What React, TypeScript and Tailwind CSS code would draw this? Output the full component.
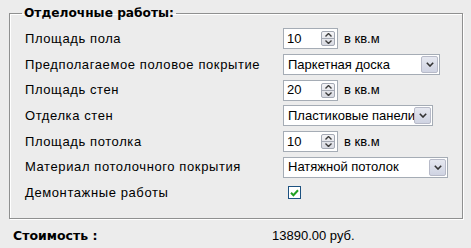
import React from "react";

const font = { fontFamily: '"Liberation Sans", Arial, sans-serif' };

function Spinner() {
  return (
    <div className="flex flex-col ml-auto mr-[2px] w-[14px] h-[15px] border border-[#a4a9b4] rounded-[2px] bg-gradient-to-b from-[#f4f4f6] to-[#d8dae2]">
      <div className="flex-1 flex items-center justify-center border-b border-[#a4a9b4]">
        <svg width="7" height="4" viewBox="0 0 7 4"><path d="M0.5 3.5 L3.5 0.5 L6.5 3.5" fill="none" stroke="#3c3c3c" strokeWidth="1.4" /></svg>
      </div>
      <div className="flex-1 flex items-center justify-center">
        <svg width="7" height="4" viewBox="0 0 7 4"><path d="M0.5 0.5 L3.5 3.5 L6.5 0.5" fill="none" stroke="#3c3c3c" strokeWidth="1.4" /></svg>
      </div>
    </div>
  );
}

function NumberInput({ value }: { value: string }) {
  return (
    <div className="flex items-center">
      <div className="flex items-center w-[55px] h-[21px] bg-white border border-[#a5acb5] pl-[3px] text-[13px] text-black">
        <span>{value}</span>
        <Spinner />
      </div>
      <span className="ml-[6px] text-[13px] text-black">в кв.м</span>
    </div>
  );
}

function Select({ value, width }: { value: string; width: number }) {
  return (
    <div
      className="flex items-center h-[21px] bg-white border border-[#a5acb5] pl-[4px] text-[13px] text-black"
      style={{ width }}
    >
      <span className="whitespace-nowrap overflow-hidden flex-1">{value}</span>
      <div className="w-[17px] h-[17px] mr-[1px] flex items-center justify-center border border-[#b7bac8] rounded-[2px] bg-gradient-to-b from-[#e6e8f0] to-[#cfd3e2]">
        <svg width="8" height="5" viewBox="0 0 8 5"><path d="M0.8 0.8 L4 4 L7.2 0.8" fill="none" stroke="#333" strokeWidth="1.6" /></svg>
      </div>
    </div>
  );
}

function Checkbox() {
  return (
    <div className="ml-[5px] w-[13px] h-[13px] border border-[#1c5180] bg-white flex items-center justify-center">
      <svg width="9" height="8" viewBox="0 0 9 8"><path d="M1 3.8 L3.4 6.2 L8 1.2" fill="none" stroke="#21a121" strokeWidth="2" /></svg>
    </div>
  );
}

const rows: { label: string; control: React.ReactNode }[] = [
  { label: "Площадь пола", control: <NumberInput value="10" /> },
  { label: "Предполагаемое половое покрытие", control: <Select value="Паркетная доска" width={157} /> },
  { label: "Площадь стен", control: <NumberInput value="20" /> },
  { label: "Отделка стен", control: <Select value="Пластиковые панели" width={150} /> },
  { label: "Площадь потолка", control: <NumberInput value="10" /> },
  { label: "Материал потолочного покрытия", control: <Select value="Натяжной потолок" width={165} /> },
  { label: "Демонтажные работы", control: <Checkbox /> },
];

export default function App() {
  return (
    <div className="w-[471px] h-[248px] bg-[#ececec] overflow-hidden" style={font}>
      <div className="pt-[6px] pl-[9px] pr-[8px]">
        <fieldset className="border border-[#8f9090] shadow-[1px_1px_0_#ffffff,inset_1px_1px_0_#ffffff] pl-[15px] pt-[6px] pb-[8px] h-[213px]">
          <legend className="-ml-[3px] px-[2px] font-bold text-black leading-[14px]" style={{ fontFamily: '"DejaVu Sans", Verdana, sans-serif', fontSize: "12.2px" }}>
            Отделочные работы:
          </legend>
          <div className="grid grid-cols-[258px_1fr]">
            {rows.map((r) => (
              <React.Fragment key={r.label}>
                <div className="h-[25.67px] flex items-center text-[13px] tracking-[0.6px] text-black whitespace-nowrap">{r.label}</div>
                <div className="h-[25.67px] flex items-center">{r.control}</div>
              </React.Fragment>
            ))}
          </div>
        </fieldset>
      </div>
      <div className="flex items-center mt-[8px] h-[18px]">
        <span className="ml-[13px] w-[259px] text-[12.5px] font-bold text-black" style={{ fontFamily: '"DejaVu Sans", Verdana, sans-serif' }}>
          Стоимость :
        </span>
        <span className="text-[13px] text-black">13890.00 руб.</span>
      </div>
    </div>
  );
}
